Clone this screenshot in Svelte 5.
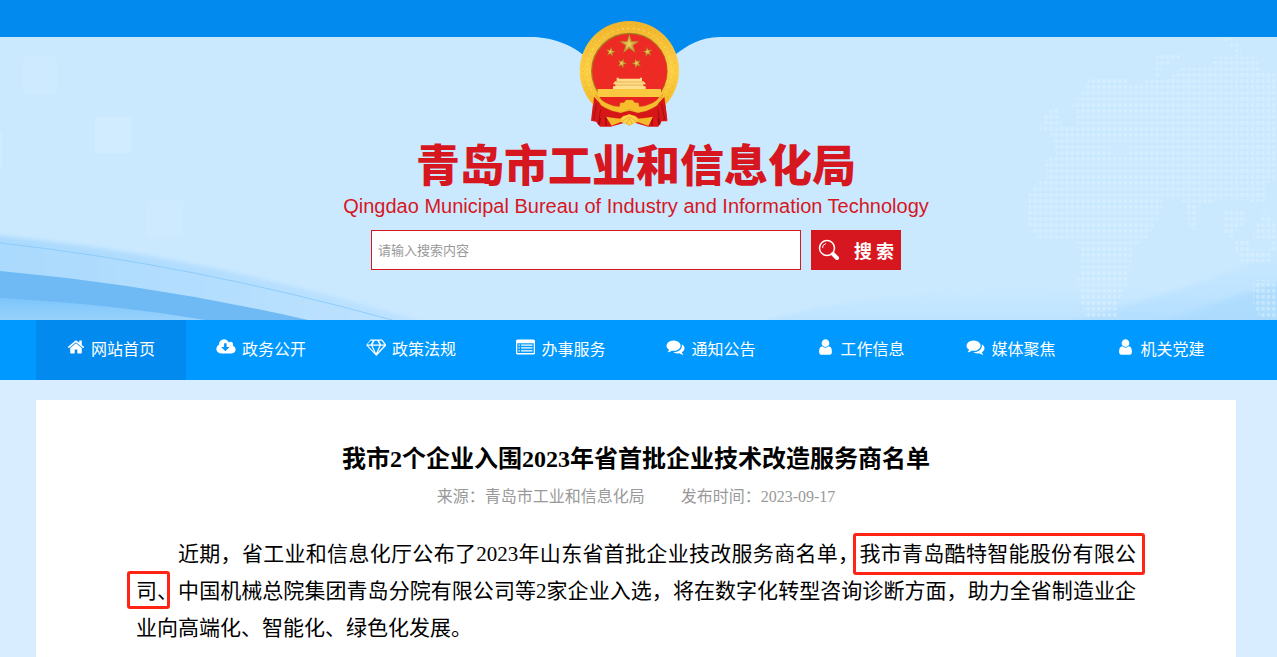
<script>
  const icons = {
    home: 'M1472 992v480q0 26-19 45t-45 19h-384v-384h-256v384h-384q-26 0-45-19t-19-45v-480q0-1 .5-3t.5-3l575-474 575 474q1 2 1 6zm223-69l-62 74q-8 9-21 11h-3q-13 0-21-7l-692-577-692 577q-12 8-24 7-13-2-21-11l-62-74q-8-10-7-23.5t11-21.5l719-599q32-26 76-26t76 26l244 204v-195q0-14 9-23t23-9h192q14 0 23 9t9 23v408l219 182q10 8 11 21.5t-7 23.5z',
    cloud: 'M1216 928q0-14-9-23t-23-9h-224v-352q0-13-9.500-22.500t-22.500-9.500h-192q-13 0-22.500 9.500t-9.500 22.500v352h-224q-13 0-22.500 9.500t-9.500 22.500q0 14 9 23l352 352q9 9 23 9t23-9l351-351q10-12 10-24zm640 224q0 159-112.500 271.500t-271.500 112.500h-1088q-185 0-316.500-131.500t-131.500-316.500q0-130 70-240t188-165q-2-30-2-43 0-212 150-362t362-150q156 0 285.500 87t188.500 231q71-62 166-62 106 0 181 75t75 181q0 76-41 138 130 31 213.500 135.500t83.500 238.500z',
    diamond: 'M212 768l623 665-300-665h-323zm812 772l349-772h-698zm-538-900l204-384h-262l-288 384h346zm727 793l623-665h-323zm-530-793h682l-204-384h-274zm861 0h346l-288-384h-262zm141-487l384 512q14 18 13 41.500t-17 40.500l-960 1024q-18 20-47 20t-47-20l-960-1024q-16-17-17-40.500t13-41.500l384-512q18-26 51-26h1152q33 0 51 26z',
    list: 'M160 128h1600q160 0 160 160v1216q0 160-160 160H160Q0 1664 0 1504V288Q0 128 160 128zM128 512v992h1664V512zM256 640h128v128H256zm256 0h1152v128H512zM256 928h128v128H256zm256 0h1152v128H512zM256 1216h128v128H256zm256 0h1152v128H512z',
    comments: 'M1408 768q0 139-94 257t-256.500 186.500-353.500 68.500q-86 0-176-16-124 88-278 128-36 9-86 16h-3q-11 0-20.500-8t-11.500-21q-1-3-1-6.500t.5-6.500 2-6l2.500-5 3.500-5.500 4-5 4.500-5 4-4.500q5-6 23-25t26-29.500 22.500-29 25-38.500 20.500-44q-124-72-195-177t-71-224q0-139 94-257t256.500-186.500 353.500-68.500 353.500 68.500 256.500 186.500 94 257zm384 256q0 120-71 224.500t-195 176.500q10 24 20.500 44t25 38.500 22.500 29 26 29.500 23 25q1 1 4 4.500t4.500 5 4 5 3.500 5.500l2.500 5 2 6 .5 6.500-1 6.500q-3 14-13 22t-22 7q-50-7-86-16-154-40-278-128-90 16-176 16-271 0-472-132 58 4 88 4 161 0 309-45t264-129q125-92 192-212t67-254q0-77-23-152 129 71 204 178t75 230z',
    user: 'M1536 1399q0 109-62.500 187t-150.500 78h-854q-88 0-150.500-78t-62.500-187q0-85 8.500-160.500t31.500-152 58.500-131 94-89 134.500-34.500q131 128 313 128t313-128q76 0 134.500 34.500t94 89 58.500 131 31.500 152 8.500 160.500zm-256-887q0 159-112.500 271.500t-271.500 112.500-271.500-112.500-112.500-271.500 112.500-271.500 271.500-112.500 271.500 112.500 112.500 271.500z'
  };

  const links = [
    { label: '网站首页', icon: 'home', box: '0 0 1792 1792', w: 18 },
    { label: '政务公开', icon: 'cloud', box: '-64 0 1920 1792', w: 20 },
    { label: '政策法规', icon: 'diamond', box: '0 0 2048 1792', w: 20 },
    { label: '办事服务', icon: 'list', box: '0 0 1920 1792', w: 19 },
    { label: '通知公告', icon: 'comments', box: '0 0 1792 1792', w: 19 },
    { label: '工作信息', icon: 'user', box: '128 0 1536 1792', w: 17 },
    { label: '媒体聚焦', icon: 'comments', box: '0 0 1792 1792', w: 19 },
    { label: '机关党建', icon: 'user', box: '128 0 1536 1792', w: 17 }
  ];

  function star(cx, cy, r, turn = 0) {
    return Array.from({ length: 10 }, (_, i) => {
      const a = (i * 36 - 90 + turn) * Math.PI / 180;
      const d = i % 2 ? r * 0.38 : r;
      return `${(cx + d * Math.cos(a)).toFixed(1)},${(cy + d * Math.sin(a)).toFixed(1)}`;
    }).join(' ');
  }

  const stars = [[328, 133, 31, 0], [272, 156, 15, 10], [383, 156, 15, -10], [306, 190, 15, 20], [350, 190, 15, -20]];
</script>

<header>
  <svg class="backdrop" viewBox="0 0 1277 320" preserveAspectRatio="xMidYMin slice" aria-hidden="true">
    <defs>
      <pattern id="dots" width="5.3" height="6" patternUnits="userSpaceOnUse">
        <rect x="1" y="1" width="3.400" height="3.800" rx="1" fill="#e2f4ff" />
      </pattern>
      <linearGradient id="band" x1="0" y1="0" x2="1" y2="0">
        <stop offset="0" stop-color="#a9d9fd" />
        <stop offset="1" stop-color="#bfe3ff" />
      </linearGradient>
      <linearGradient id="low" x1="0" y1="0" x2="0" y2="1">
        <stop offset="0" stop-color="#7cc5fb" />
        <stop offset="1" stop-color="#98d2fc" />
      </linearGradient>
      <linearGradient id="haze" x1="0" y1="0" x2="0" y2="1">
        <stop offset="0" stop-color="#b0ddff" stop-opacity="0" />
        <stop offset="1" stop-color="#b0ddff" stop-opacity=".75" />
      </linearGradient>
      <linearGradient id="gold" x1="0" y1="0" x2="0" y2="1">
        <stop offset="0" stop-color="#f0b52c" />
        <stop offset=".5" stop-color="#fccf45" />
        <stop offset="1" stop-color="#f0b21e" />
      </linearGradient>
      <filter id="soft" x="-10%" y="-30%" width="120%" height="160%"><feGaussianBlur stdDeviation="2" /></filter>
    </defs>
    <rect width="1277" height="320" fill="#cae9ff" />
    <g fill="#d1ecff">
      <rect x="23" y="57" width="34" height="37" opacity=".5" />
      <rect x="95" y="117" width="36" height="36" />
      <rect x="0" y="133" width="2" height="36" />
      <rect x="147" y="201" width="36" height="36" opacity=".5" />
    </g>
    <path d="M-20 234Q200 252 450 330H-20z" fill="url(#band)" filter="url(#soft)" />
    <path d="M0 243Q190 264 392 320" fill="none" stroke="#83c8fa" stroke-width="1" opacity=".8" />
    <path d="M0 271Q155 285 308 320H0z" fill="#6fbaf4" />
    <path d="M0 298Q110 304 205 320H0z" fill="url(#low)" />
    <path d="M740 330Q900 268 1300 296V330z" fill="url(#haze)" opacity=".8" filter="url(#soft)" />
    <path d="M1030 330Q1180 297 1300 242V330z" fill="url(#haze)" filter="url(#soft)" />
    <path d="M1140 330Q1220 301 1300 275V330z" fill="#a9dafd" opacity=".65" filter="url(#soft)" />
    <g transform="translate(900 0)" fill="url(#dots)" opacity=".45">
      <path d="M191 77H227L232 87 247 80H267L281 68H310L313 57H357L360 70H377V181L367 183V201L353 203 349 200 317 200 298 207V230H290L285 203 277 198H263L262 210 248 237 233 247 228 282 218 302V317H187L181 302 177 280 181 263 177 240H138L127 223 125 200 135 185 147 177 145 160 157 153 150 133 139 129 146 113 157 107 162 125H177V110L172 106 181 95 185 86zM257 55H280V60H270V66H262L260 77H256V60zM318 38H332V44H341V56H333V49H327V42zM322 210H346V222L334 232 336 250 342 262H370V240H353V232L365 210 377 226V250H350V241H338L322 233zM353 280H377V318H360L353 303z" />
    </g>
    <path d="M1110 145H1130V154H1110z" fill="#cae9ff" opacity=".8" />
    <path d="M0 0H1277V37H720C700 37 687 46 676 54H582C573 46 552 37 532 37H0z" fill="#028aef" />

    <g transform="translate(520 0) scale(.33333)">
      <path d="M222 286L213 362 228 365 240 380H272L330 364 384 380H415L425 364H442L433 286z" fill="#df1518" />
      <path d="M230 300L222 360M246 320L238 375M257 330L258 378M424 300L432 360M410 320L417 375M398 330L396 378" stroke="#8f0e12" stroke-width="4" fill="none" />
      <circle cx="328" cy="212" r="149" fill="url(#gold)" />
      <circle cx="328" cy="212" r="139" fill="none" stroke="#d99b21" stroke-width="2" stroke-dasharray="3 13" />
      <circle cx="328" cy="212" r="127" fill="none" stroke="#ffe070" stroke-width="3" stroke-dasharray="5 11" />
      <circle cx="328" cy="213" r="115" fill="#a87920" />
      <circle cx="329" cy="214" r="112" fill="#ed2b24" />
      {#each stars as [x, y, r, turn]}
        <polygon points={star(x, y, r, turn)} fill="#d0a03a" stroke="#9c641a" stroke-width="1" />
        <polygon points={star(x - 1, y - 1, r * 0.5, turn)} fill="#ecc95c" />
      {/each}
      <path d="M290 233H296V236H360V233H366V244H290zM285 244H371L378 253H279zM286 253H370V267H286zM279 259H377V267H279z" fill="#ffdf8b" />
      <path d="M286 246H371M286 255H370" stroke="#d99a3a" stroke-width="2" />
      <path d="M233 267H423V282L418 291H238L233 282z" fill="#fbc842" />
      <path d="M238 291H418L398 316 363 331 346 310H310L293 331 258 316z" fill="#e7231f" />
      <path d="M222 290Q248 325 300 338L328 332 356 338Q408 325 433 290L442 360 399 350 356 356 328 343 300 356 258 350 216 360z" fill="#d71618" />
      <path d="M226 284Q258 318 298 320L301 308H312L318 300H338L344 308H355L358 320Q398 318 429 284L412 316Q378 339 348 337L328 328 308 337Q278 339 243 316z" fill="#f7bd2d" stroke="#c3871e" stroke-width="1" />
      <path d="M258 350L299 357 310 348 328 343 346 348 357 357 399 350 385 378 351 365 328 377 304 365 275 377z" fill="#f5ba29" />
      <path d="M302 366L308 352 328 344 348 352 354 366 328 373z" fill="#ffd34c" />
      <path d="M305 365L328 350 351 365M319 372L328 355 337 372" fill="none" stroke="#d99b21" stroke-width="2" />
      <path d="M230 310L221 358M242 328L235 373M425 310L434 358M413 328L420 373" stroke="#9d1114" stroke-width="3" />
    </g>
  </svg>

  <div class="brand">
    <h1>青岛市工业和信息化局</h1>
    <p>Qingdao Municipal Bureau of Industry and Information Technology</p>
    <form onsubmit={(e) => e.preventDefault()}>
      <input type="text" placeholder="请输入搜索内容" aria-label="请输入搜索内容" />
      <button type="submit">
        <svg width="22" height="22" viewBox="0 0 22 22" aria-hidden="true">
          <circle cx="9" cy="9" r="7.500" fill="none" stroke="#fff" stroke-width="1.500" />
          <path d="M4.500 9A4.500 4.500 0 0 1 8 4.500" fill="none" stroke="#fff" />
          <path d="M15 15L19 19" stroke="#fff" stroke-width="4" stroke-linecap="round" />
        </svg>
        <span>搜 索</span>
      </button>
    </form>
  </div>
</header>

<nav>
  <ul>
    {#each links as link, i}
      <li>
        <a href="#top" class:active={i === 0}>
          <svg width={link.w} height="18" viewBox={link.box} aria-hidden="true">
            <path d={icons[link.icon]} fill="#fff" fill-rule={link.icon === 'list' ? 'evenodd' : 'nonzero'} />
          </svg>
          <span>{link.label}</span>
        </a>
      </li>
    {/each}
  </ul>
</nav>

<main>
  <article>
    <h2>我市2个企业入围2023年省首批企业技术改造服务商名单</h2>
    <div class="meta">
      <span>来源：青岛市工业和信息化局</span>
      <span>发布时间：2023-09-17</span>
    </div>
    <p class="text">近期，省工业和信息化厅公布了2023年山东省首批企业技改服务商名单，<span class="mark">我市青岛酷特智能股份有限公</span><span class="mark tail">司、</span>中国机械总院集团青岛分院有限公司等2家企业入选，将在数字化转型咨询诊断方面，助力全省制造业企业向高端化、智能化、绿色化发展。</p>
  </article>
</main>

<style>
  :global(body) {
    margin: 0;
    background: #d8edff;
    font-family: "Liberation Serif", "Noto Sans CJK SC", serif;
    font-size: 16px;
  }

  header {
    position: relative;
    min-height: 320px;
    background: #cae9ff;
  }

  .backdrop {
    position: absolute;
    inset: 0;
    width: 100%;
    height: 100%;
  }

  .brand {
    position: relative;
    display: flex;
    flex-direction: column;
    align-items: center;
    padding: 134px 5px 0 0;
    color: #d7171f;
  }

  h1 {
    margin: 0;
    font: 900 44px/58px "Noto Sans CJK SC", sans-serif;
  }

  .brand p {
    margin: 2px 0 0;
    font: 20px/24px "Liberation Sans", sans-serif;
  }

  form {
    display: flex;
    gap: 10px;
    margin-top: 12px;
  }

  input {
    box-sizing: border-box;
    width: 430px;
    height: 40px;
    padding: 0 6px 2px;
    border: 1px solid #d7171f;
    background: #fff;
    font: 13px "Noto Sans CJK SC", sans-serif;
  }

  input::placeholder {
    color: #999;
  }

  button {
    display: flex;
    align-items: center;
    justify-content: space-between;
    width: 90px;
    height: 40px;
    padding: 0 7px;
    border: 0;
    background: #d7171f;
    color: #fff;
    font: bold 18px "Noto Sans CJK SC", sans-serif;
  }

  nav {
    padding-right: 5px;
    background: #0099ff;
  }

  ul {
    display: grid;
    grid-template-columns: repeat(8, 1fr);
    max-width: 1200px;
    margin: 0 auto;
    padding: 0;
    list-style: none;
  }

  nav a {
    display: flex;
    justify-content: center;
    gap: 6px;
    height: 60px;
    color: #fff;
    line-height: 60px;
    text-decoration: none;
  }

  nav a svg {
    margin-top: 18px;
  }

  nav a.active {
    background: #028aef;
  }

  main {
    padding: 20px 5px 0 0;
  }

  article {
    box-sizing: border-box;
    max-width: 1200px;
    min-height: 257px;
    margin: 0 auto;
    padding: 40px 100px 10px;
    background: #fff;
  }

  h2 {
    margin: 0;
    font-size: 24px;
    line-height: 38px;
    text-align: center;
  }

  .meta {
    display: flex;
    justify-content: center;
    gap: 36px;
    color: #999;
    line-height: 38px;
  }

  .text {
    margin: 20px 0 0;
    color: #000;
    font-size: 21px;
    line-height: 37px;
    text-align: justify;
    text-indent: 2em;
  }

  .mark {
    position: relative;
  }

  .mark::after {
    content: "";
    position: absolute;
    inset: -9px -9px -9px -6px;
    border: 3px solid #ff2414;
    border-radius: 3px;
  }

  .tail::after {
    inset: -8px 8px -6px -9px;
  }
</style>
